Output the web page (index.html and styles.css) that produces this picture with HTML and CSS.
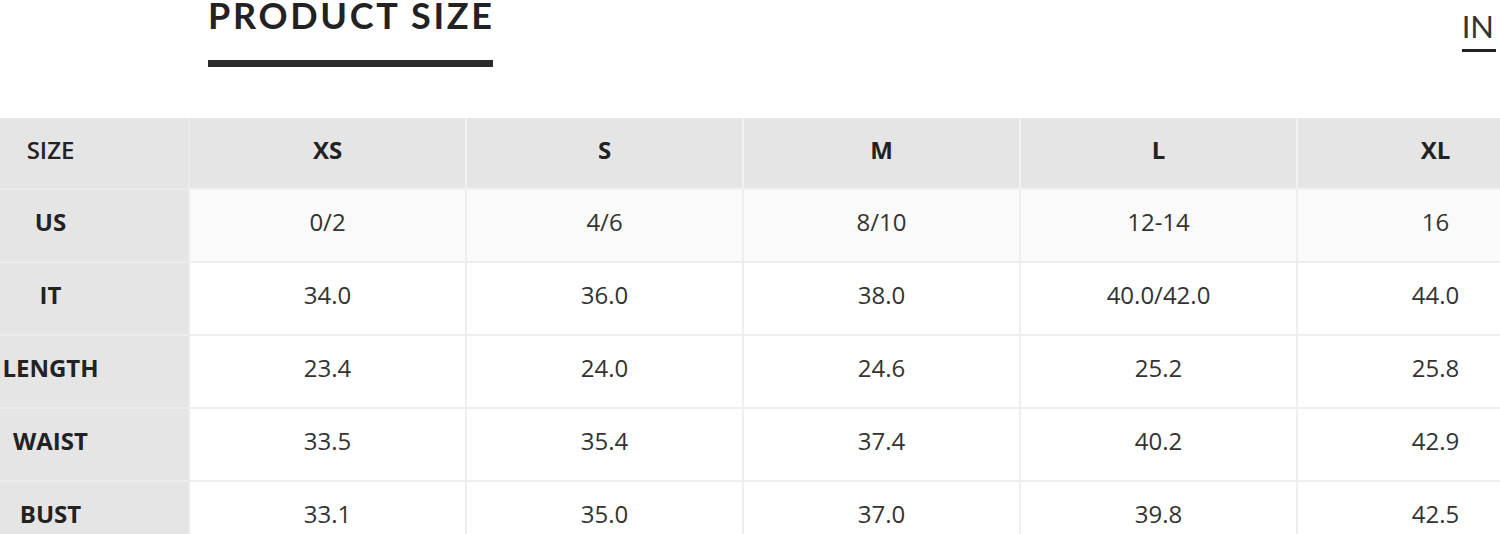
FILE: index.html
```html
<!DOCTYPE html>
<html lang="en">
<head>
<meta charset="utf-8">
<title>Product Size</title>
<link rel="stylesheet" href="styles.css">
</head>
<body>
<div class="page">
  <header class="top">
    <div class="title-block">
      <h2 class="title">PRODUCT SIZE</h2>
      <div class="title-bar"></div>
    </div>
    <div class="unit">IN</div>
  </header>
  <div class="table-wrap">
    <table class="size-table">
      <thead>
        <tr>
          <th class="label head-label">SIZE</th>
          <th>XS</th>
          <th>S</th>
          <th>M</th>
          <th>L</th>
          <th>XL</th>
        </tr>
      </thead>
      <tbody>
        <tr class="alt">
          <th class="label">US</th>
          <td>0/2</td><td>4/6</td><td>8/10</td><td>12-14</td><td>16</td>
        </tr>
        <tr>
          <th class="label">IT</th>
          <td>34.0</td><td>36.0</td><td>38.0</td><td>40.0/42.0</td><td>44.0</td>
        </tr>
        <tr>
          <th class="label">LENGTH</th>
          <td>23.4</td><td>24.0</td><td>24.6</td><td>25.2</td><td>25.8</td>
        </tr>
        <tr>
          <th class="label">WAIST</th>
          <td>33.5</td><td>35.4</td><td>37.4</td><td>40.2</td><td>42.9</td>
        </tr>
        <tr>
          <th class="label">BUST</th>
          <td>33.1</td><td>35.0</td><td>37.0</td><td>39.8</td><td>42.5</td>
        </tr>
      </tbody>
    </table>
  </div>
</div>
</body>
</html>
```

FILE: styles.css
```css
html, body {
  margin: 0;
  padding: 0;
  background: #ffffff;
}
body {
  width: 1500px;
  height: 534px;
  overflow: hidden;
  font-family: "Open Sans", "Liberation Sans", sans-serif;
  color: #333;
}
.page {
  display: flex;
  flex-direction: column;
}
.top {
  display: flex;
  justify-content: space-between;
  align-items: flex-start;
  height: 118px;
}
.title-block {
  margin-left: 208px;
  width: 285px;
  display: flex;
  flex-direction: column;
}
.title {
  margin: 0;
  font-family: "Lato", sans-serif;
  font-weight: 700;
  font-size: 36px;
  letter-spacing: 2.7px;
  line-height: 30px;
  color: #222;
  white-space: nowrap;
}
.title-bar {
  margin-top: 30px;
  height: 7px;
  background: #2b2b2b;
}
.unit {
  margin-right: 4px;
  margin-top: 10px;
  font-family: "Lato", sans-serif;
  font-weight: 400;
  font-size: 31px;
  line-height: 32px;
  color: #333;
  padding: 0 2px 7px 0;
  border-bottom: 3px solid #222;
}
.table-wrap {
  margin-left: -89px;
}
.size-table {
  border-collapse: collapse;
  table-layout: fixed;
  width: 1662px;
}
.size-table th,
.size-table td {
  width: 275px;
  padding: 0 0 8px 0;
  text-align: center;
  vertical-align: middle;
  font-size: 24px;
  color: #333;
  border: 2px solid #eeeeee;
}
.size-table thead th {
  height: 62px;
  background: #e5e5e5;
  font-weight: 700;
  color: #222;
  border-top: 0;
  border-color: #f2f2f2;
}
.size-table tbody td,
.size-table tbody th {
  height: 63px;
}
.size-table tbody td {
  font-weight: 400;
  background: #ffffff;
}
.size-table tbody tr.alt td {
  background: #fafafa;
}
.size-table .label {
  background: #e5e5e5;
  font-weight: 700;
  color: #222;
  border-color: #ececec;
}
.size-table .head-label {
  font-weight: 600;
}
```
